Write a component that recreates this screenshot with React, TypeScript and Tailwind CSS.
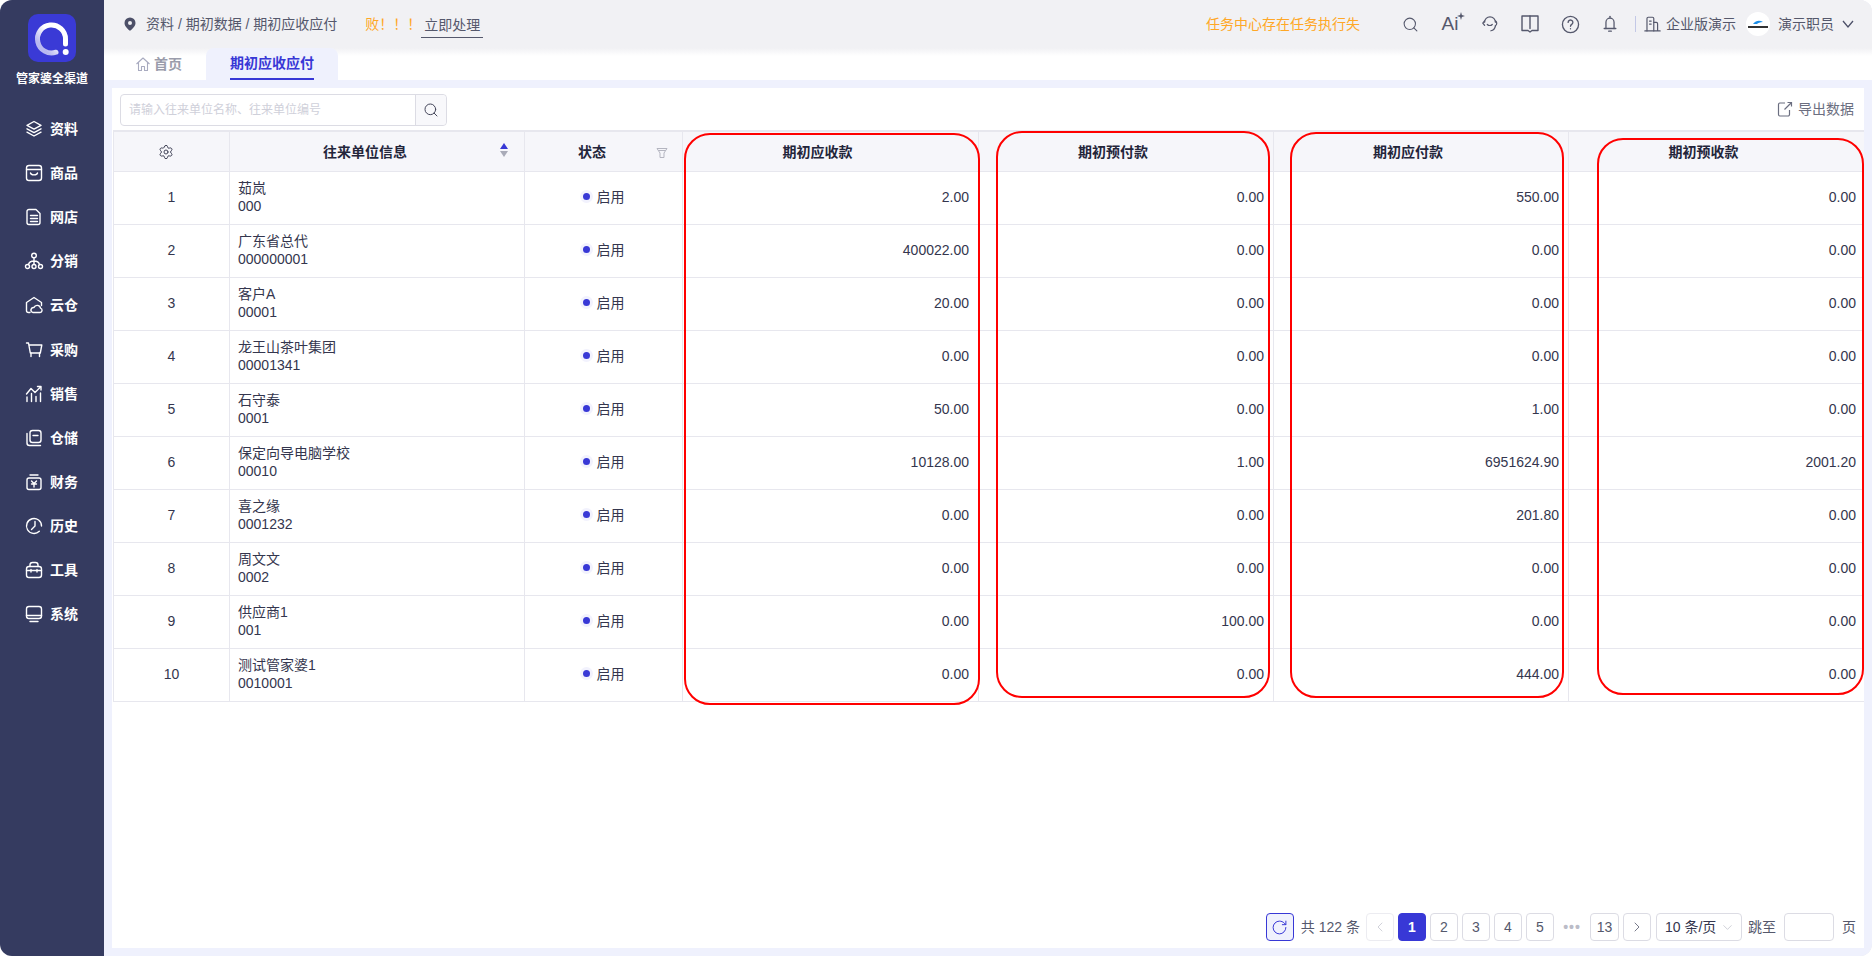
import { useState, type ReactNode } from "react";
import { ChevronDown, ChevronLeft, ChevronRight, RotateCw, Search, Settings } from "lucide-react";

type IconProps = { children: ReactNode; size?: number; className?: string };

function Ico({ children, size = 20, className = "" }: IconProps) {
  return (
    <svg
      width={size}
      height={size}
      viewBox="0 0 20 20"
      fill="none"
      stroke="currentColor"
      strokeWidth="1.4"
      strokeLinecap="round"
      strokeLinejoin="round"
      className={className}
    >
      {children}
    </svg>
  );
}

const NAV: { label: string; icon: ReactNode; text: string }[] = [
  {
    label: "资料",
    text: "ml-0",
    icon: (
      <Ico>
        <path d="M10 2.500l7 3.800-7 3.800-7-3.800z" />
        <path d="M3 9.800l7 3.800 7-3.800" />
        <path d="M3 13.200l7 3.800 7-3.800" />
      </Ico>
    ),
  },
  {
    label: "商品",
    text: "ml-0",
    icon: (
      <Ico>
        <rect x="2.500" y="2.500" width="15" height="15" rx="2.500" />
        <path d="M2.500 6.500h15" />
        <path d="M6.500 10c.5 2.500 6.500 2.500 7 0" />
      </Ico>
    ),
  },
  {
    label: "网店",
    text: "ml-0",
    icon: (
      <Ico>
        <path d="M5 2.500h7l4 4v9a2 2 0 0 1-2 2H5a2 2 0 0 1-2-2v-11a2 2 0 0 1 2-2z" />
        <path d="M6.500 8.500h7M6.500 11.500h7M6.500 14.500h7" />
      </Ico>
    ),
  },
  {
    label: "分销",
    text: "ml-[2px]",
    icon: (
      <Ico>
        <circle cx="10" cy="4.500" r="2.300" />
        <circle cx="3.500" cy="15.500" r="2" />
        <circle cx="10" cy="15.500" r="2" />
        <circle cx="16.500" cy="15.500" r="2" />
        <path d="M10 7v6.500M4.500 13.500c.5-2 2-3.500 5.500-3.500s5 1.500 5.500 3.500" />
      </Ico>
    ),
  },
  {
    label: "云仓",
    text: "ml-0",
    icon: (
      <Ico>
        <path d="M6 17.500H4.500a2 2 0 0 1-2-2V7.500L10 2.500l7.500 5v3" />
        <path d="M9 17.500h7a2.200 2.200 0 0 0 .5-4.300 3.400 3.400 0 0 0-6.500-.7A2.500 2.500 0 0 0 9 17.500z" />
      </Ico>
    ),
  },
  {
    label: "采购",
    text: "ml-0",
    icon: (
      <Ico>
        <path d="M2.500 3h2l1.800 10h10l1.500-8H5" />
        <path d="M7 13v3.500M15.500 13v3.500" />
      </Ico>
    ),
  },
  {
    label: "销售",
    text: "ml-[1px]",
    icon: (
      <Ico>
        <path d="M2.500 10L7 4.500l4 4 5.500-5.500" />
        <path d="M13.500 2.500h3.500V6" />
        <path d="M3 13v4.500M7.500 9.500v8M12 12.500v5M16.500 9v8.500" />
      </Ico>
    ),
  },
  {
    label: "仓储",
    text: "ml-0",
    icon: (
      <Ico>
        <path d="M3 5.500v9.500a2.500 2.500 0 0 0 2.500 2.500h11" />
        <rect x="6" y="2.500" width="11" height="12" rx="2.500" />
        <path d="M9 7.500h5" />
      </Ico>
    ),
  },
  {
    label: "财务",
    text: "ml-0",
    icon: (
      <Ico>
        <path d="M6 3h8" />
        <rect x="3" y="6" width="14" height="11.500" rx="2" />
        <path d="M7.500 9l2.500 2.500L12.500 9M7.500 12h5M10 11.500v3.500" />
      </Ico>
    ),
  },
  {
    label: "历史",
    text: "ml-0",
    icon: (
      <Ico>
        <path d="M17.500 10a7.500 7.500 0 1 0-2.200 5.300" />
        <path d="M11 5.500V10l-3.500 3.500" />
      </Ico>
    ),
  },
  {
    label: "工具",
    text: "ml-0",
    icon: (
      <Ico>
        <rect x="2.500" y="6.500" width="15" height="11" rx="2.500" />
        <path d="M6 6.500V5a2.500 2.500 0 0 1 2.500-2.500h3A2.500 2.500 0 0 1 14 5v1.500" />
        <path d="M2.500 10.500h15M7 9.500v2.500M13 9.500v2.500" />
      </Ico>
    ),
  },
  {
    label: "系统",
    text: "ml-[1px]",
    icon: (
      <Ico>
        <rect x="2.500" y="2.500" width="15" height="12" rx="2.500" />
        <path d="M2.500 11.500h15M6 17.500h8" />
      </Ico>
    ),
  },
];

const ROWS = [
  ["茹岚", "000", "2.00", "0.00", "550.00", "0.00"],
  ["广东省总代", "000000001", "400022.00", "0.00", "0.00", "0.00"],
  ["客户A", "00001", "20.00", "0.00", "0.00", "0.00"],
  ["龙王山茶叶集团", "00001341", "0.00", "0.00", "0.00", "0.00"],
  ["石守泰", "0001", "50.00", "0.00", "1.00", "0.00"],
  ["保定向导电脑学校", "00010", "10128.00", "1.00", "6951624.90", "2001.20"],
  ["喜之缘", "0001232", "0.00", "0.00", "201.80", "0.00"],
  ["周文文", "0002", "0.00", "0.00", "0.00", "0.00"],
  ["供应商1", "001", "0.00", "100.00", "0.00", "0.00"],
  ["测试管家婆1", "0010001", "0.00", "0.00", "444.00", "0.00"],
];

const GRID = "grid grid-cols-[116px_295px_158px_296px_295px_295px_295px]";

function Logo() {
  return (
    <div className="w-12 h-12 rounded-[10px] bg-[#3a3ad6] flex items-center justify-center">
      <svg width="48" height="48" viewBox="0 0 48 48" fill="none">
        <defs>
          <linearGradient id="ring" x1="12" y1="30" x2="30" y2="14" gradientUnits="userSpaceOnUse">
            <stop offset="0" stopColor="#b9b9f0" />
            <stop offset="0.6" stopColor="#ffffff" />
            <stop offset="1" stopColor="#ffffff" />
          </linearGradient>
        </defs>
        <path d="M28 38.200A14 14 0 1 1 37.500 25V30" stroke="url(#ring)" strokeWidth="5" strokeLinecap="round" />
        <circle cx="37.700" cy="38" r="3" fill="#fff" />
      </svg>
    </div>
  );
}

function Sidebar() {
  return (
    <aside className="w-[104px] shrink-0 bg-[#353b60] text-white flex flex-col">
      <div className="pt-[14px] flex justify-center">
        <Logo />
      </div>
      <div className="mt-[10px] text-center text-xs font-bold leading-[14px]">管家婆全渠道</div>
      <nav className="mt-[21px] flex flex-col">
        {NAV.map((n) => (
          <div key={n.label} className="h-[44.1px] flex items-center pl-[24px]">
            <span className="w-5 h-5 flex items-center justify-center">{n.icon}</span>
            <span className={`ml-[6px] text-sm font-bold ${n.text}`}>{n.label}</span>
          </div>
        ))}
      </nav>
    </aside>
  );
}

function TopBar() {
  return (
    <header className="h-12 shrink-0 bg-[#f1f1f4] flex items-center text-sm text-[#55586c]">
      <svg width="14" height="14" viewBox="0 0 14 14" className="ml-[19px] mr-[9px]">
        <path
          fillRule="evenodd"
          d="M7 .5a5.500 5.500 0 0 1 5.500 5.500c0 3.200-3.500 6.500-5.500 7.800C5 12.500 1.500 9.200 1.500 6A5.500 5.500 0 0 1 7 .5zM7 4a2 2 0 1 0 0 4 2 2 0 0 0 0-4z"
          fill="#4d5068"
        />
      </svg>
      <span>资料 / 期初数据 / 期初应收应付</span>
      <span className="ml-[28px] text-[#ffa726]">败！！！</span>
      <span className="px-[3px] leading-[24px] border-b border-[#55586c] mt-[2px]">立即处理</span>
      <span className="ml-auto mr-[30px] text-[#ffa726]">任务中心存在任务执行失</span>
      <div className="flex items-center text-[#55586c]">
        <span className="w-10 flex justify-center">
          <Search size={17} strokeWidth={1.5} />
        </span>
        <span className="w-10 flex justify-center">
          <span className="relative text-[19px] leading-5 font-normal">
            Ai
            <svg width="8" height="8" viewBox="0 0 8 8" className="absolute -right-[7px] -top-[2px]">
              <path d="M4 0l.9 3.100L8 4l-3.100.9L4 8l-.9-3.100L0 4l3.100-.9z" fill="currentColor" />
            </svg>
          </span>
        </span>
        <span className="w-10 flex justify-center">
          <Ico size={18}>
            <path d="M4 8a6 6 0 0 1 12 0" />
            <path d="M16 6.500c2 1 2 4.500 0 5.500" />
            <path d="M16 12c-.5 3-2.500 5-5 5.500" />
            <path d="M4 6.500L2 9l2 2.500" />
            <path d="M7 10.500c1.500 1.500 4 1.500 5.500 0" />
          </Ico>
        </span>
        <span className="w-10 flex justify-center">
          <Ico size={20}>
            <path d="M2 2h16v14.500H12l-2 1.500-2-1.500H2z" />
            <path d="M10 2v12.500" />
          </Ico>
        </span>
        <span className="w-10 flex justify-center">
          <Ico size={19}>
            <circle cx="10" cy="10" r="8.500" />
            <path d="M7.500 7.800a2.500 2.500 0 1 1 3.800 2.100c-.9.6-1.300 1-1.300 2" />
            <path d="M10 14.500v.1" />
          </Ico>
        </span>
        <span className="w-10 flex justify-center">
          <Ico size={18}>
            <path d="M10 1.500v1.500" />
            <path d="M5.500 15V8a4.500 4.500 0 0 1 9 0v7" />
            <path d="M3.500 15h13" />
            <path d="M8.500 18h3" />
          </Ico>
        </span>
      </div>
      <span className="ml-[5px] w-px h-4 bg-[#c3c8e6]" />
      <span className="ml-[8px]">
        <Ico size={17}>
          <path d="M3.500 17.500V3a1.500 1.500 0 0 1 1.500-1.500h5A1.500 1.500 0 0 1 11.500 3v14.500" />
          <path d="M11.500 7.500h3a1.500 1.500 0 0 1 1.500 1.500v8.500M1 17.500h18M6.500 6h2M6.500 9.500h2" />
        </Ico>
      </span>
      <span className="ml-[5px]">企业版演示</span>
      <span className="ml-[10px] w-6 h-6 rounded-full bg-white flex flex-col items-center justify-center">
        <svg width="12" height="5" viewBox="0 0 12 5" className="mb-px">
          <path d="M1 4c3-4 7-4 10-2-3 0-5 1-6 2z" fill="#1c8ee8" />
        </svg>
        <span className="w-[20px] h-[2px] bg-[#333]" />
      </span>
      <span className="ml-2">演示职员</span>
      <svg width="14" height="14" viewBox="0 0 14 14" fill="none" stroke="#4d5068" strokeWidth="1.300" className="ml-[7px] mr-[17px] shrink-0">
        <path d="M2 4l5 6 5-6" />
      </svg>
    </header>
  );
}

function Tabs() {
  return (
    <div className="relative h-8 shrink-0 bg-white flex items-end">
      <div className="absolute inset-x-0 top-0 h-2 bg-gradient-to-b from-[#f1f1f4] to-white" />
      <div className="relative h-8 ml-[31px] flex items-center text-sm font-bold text-[#9a9cab]">
        <svg width="16" height="16" viewBox="0 0 16 16" fill="none" stroke="#a9abc0" strokeWidth="1.100" className="mr-[3px]">
          <path d="M1.500 8L8 2l6.500 6M3.500 6.500V14.500h3v-4h3v4h3V6.500" strokeLinejoin="round" />
        </svg>
        首页
      </div>
      <div className="relative ml-[24px] w-[132px] h-8 rounded-t-lg bg-[#eff1fd] flex justify-center">
        <span className="h-8 leading-[30px] border-b-2 border-[#3838d6] text-sm font-bold text-[#3838d6]">
          期初应收应付
        </span>
      </div>
    </div>
  );
}

function Toolbar() {
  return (
    <div className="h-[42px] shrink-0 flex items-center justify-between pl-2 pr-[10px]">
      <div className="flex h-8 w-[327px] mt-[2px] border border-[#dcdce4] rounded">
        <div className="flex-1 flex items-center pl-2 text-xs text-[#cfd0da]">请输入往来单位名称、往来单位编号</div>
        <div className="w-[31px] border-l border-[#dcdce4] bg-[#f8f8fb] flex items-center justify-center text-[#44465a] rounded-r">
          <Search size={16} strokeWidth={1.5} />
        </div>
      </div>
      <div className="flex items-center text-sm text-[#6b6e80]">
        <svg width="16" height="16" viewBox="0 0 16 16" fill="none" stroke="#6b6e80" strokeWidth="1.200" className="mr-[5px]">
          <path d="M8 2H3a1.500 1.500 0 0 0-1.500 1.500v10A1.500 1.500 0 0 0 3 15h8a1.500 1.500 0 0 0 1.500-1.500V9" />
          <path d="M7.500 8.500L14.500 1.500M10.500 1.500h4v4" />
        </svg>
        导出数据
      </div>
    </div>
  );
}

function HeaderCell({ children, className = "" }: { children?: ReactNode; className?: string }) {
  return (
    <div className={`relative h-[39px] flex items-center justify-center text-sm font-bold text-[#23253a] ${className}`}>
      {children}
    </div>
  );
}

function Table() {
  const edge = "border-r border-[#e7e7ee]";
  return (
    <div className="ml-px w-[1751px] border-t-2 border-[#e7e7ee]">
      <div className={`${GRID} bg-[#f6f6fa] border-b border-[#e7e7ee] border-l`}>
        <HeaderCell className={edge}>
          <Settings size={16} strokeWidth={1.5} className="text-[#44465a] -ml-[11px]" />
        </HeaderCell>
        <HeaderCell className={`pr-[24px] ${edge}`}>
          往来单位信息
          <span className="absolute right-[16px] top-[11px] flex flex-col gap-[2px]">
            <span className="w-0 h-0 border-x-[4px] border-x-transparent border-b-[6px] border-b-[#3838d6]" />
            <span className="w-0 h-0 border-x-[4px] border-x-transparent border-t-[6px] border-t-[#a9abb8]" />
          </span>
        </HeaderCell>
        <HeaderCell className={`pr-[23px] ${edge}`}>
          状态
          <svg width="12" height="12" viewBox="0 0 12 12" fill="none" stroke="#b4b5c0" strokeWidth="1" className="absolute right-[14px] top-[15px]">
            <path d="M1 1.500h10L8 6v4.500H4V6z" />
            <path d="M2.500 3.500h7" />
          </svg>
        </HeaderCell>
        <HeaderCell className={`pr-[26px] ${edge}`}>期初应收款</HeaderCell>
        <HeaderCell className={`pr-[26px] ${edge}`}>期初预付款</HeaderCell>
        <HeaderCell className={`pr-[26px] ${edge}`}>期初应付款</HeaderCell>
        <HeaderCell className="pr-[26px]">期初预收款</HeaderCell>
      </div>
      {ROWS.map((r, i) => (
        <div key={r[1]} className={`${GRID} h-[53px] border-b border-[#e7e7ee] border-l text-sm text-[#34364e]`}>
          <div className={`pb-[2px] flex items-center justify-center ${edge}`}>{i + 1}</div>
          <div className={`pb-[2px] flex flex-col justify-center pl-[8px] leading-[18.500px] ${edge}`}>
            <span>{r[0]}</span>
            <span>{r[1]}</span>
          </div>
          <div className={`pb-[2px] flex items-center justify-center ${edge}`}>
            <span className="w-[7px] h-[7px] mr-[7px] -mt-[2px] rounded-full bg-[#3838d6] ring-[3px] ring-[#f2f2fd]" />
            启用
          </div>
          {r.slice(2).map((v, j) => (
            <div key={j} className={`pb-[2px] flex items-center justify-end ${j < 3 ? `pr-[9px] ${edge}` : "pr-[8px]"}`}>
              {v}
            </div>
          ))}
        </div>
      ))}
    </div>
  );
}

// hand-drawn red marks sitting over the amount columns
function Marks() {
  return (
    <>
      <div className="absolute left-[572px] top-[45px] w-[296px] h-[572px] border-2 border-[#ff0000] rounded-[26px] pointer-events-none" />
      <div className="absolute left-[884px] top-[43px] w-[274px] h-[567px] border-2 border-[#ff0000] rounded-[26px] pointer-events-none" />
      <div className="absolute left-[1178px] top-[44px] w-[274px] h-[566px] border-2 border-[#ff0000] rounded-[26px] pointer-events-none" />
      <div className="absolute left-[1485px] top-[50px] w-[267px] h-[557px] border-2 border-[#ff0000] rounded-[26px] pointer-events-none" />
    </>
  );
}

function PageBtn({ children, active = false, muted = false, wide = false }: { children: ReactNode; active?: boolean; muted?: boolean; wide?: boolean }) {
  const look = active
    ? "bg-[#3838d6] border-[#3838d6] text-white font-bold"
    : muted
      ? "border-[#ececf1] text-[#c5c6d0]"
      : "border-[#dcdce4] text-[#55586c]";
  return (
    <span className={`${wide ? "w-[29px]" : "w-7"} h-7 border rounded flex items-center justify-center ${look}`}>{children}</span>
  );
}

function Pagination() {
  const [jump] = useState("");
  return (
    <div className="mt-auto mb-[7px] pr-2 flex items-center justify-end text-sm text-[#55586c]">
      <span className="w-7 h-7 rounded border border-[#3838d6] bg-[#eff1fd] text-[#3838d6] flex items-center justify-center">
        <RotateCw size={17} strokeWidth={1.4} />
      </span>
      <span className="ml-[7px] mr-[6px]">共 122 条</span>
      <div className="flex items-center gap-1">
        <PageBtn muted>
          <ChevronLeft size={16} strokeWidth={1.2} />
        </PageBtn>
        <PageBtn active>1</PageBtn>
        <PageBtn>2</PageBtn>
        <PageBtn>3</PageBtn>
        <PageBtn>4</PageBtn>
        <PageBtn>5</PageBtn>
      </div>
      <span className="w-[36px] text-center text-[#bbbcc8] tracking-[1px] font-bold leading-none">•••</span>
      <div className="flex items-center gap-1">
        <PageBtn wide>13</PageBtn>
        <PageBtn>
          <ChevronRight size={16} strokeWidth={1.2} />
        </PageBtn>
      </div>
      <span className="ml-[5px] w-[86px] h-7 border border-[#dcdce4] rounded flex items-center pl-2 text-[#34364e]">
        10 条/页
        <ChevronDown size={15} strokeWidth={1} className="ml-1 text-[#b4b5c0]" />
      </span>
      <span className="ml-[6px]">跳至</span>
      <input value={jump} readOnly className="ml-2 w-[50px] h-7 border border-[#dcdce4] rounded" />
      <span className="ml-[8px]">页</span>
    </div>
  );
}

export default function App() {
  return (
    <div
      className="flex w-[1872px] h-[956px] overflow-hidden rounded-[12px] bg-[#e8e8ec]"
      style={{ fontFamily: '"Liberation Sans", "Noto Sans CJK SC", sans-serif' }}
    >
      <Sidebar />
      <main className="flex-1 flex flex-col min-w-0 bg-[#eff1fd]">
        <TopBar />
        <Tabs />
        <div className="flex-1 p-2 flex min-h-0">
          <section className="relative flex-1 bg-white flex flex-col">
            <Toolbar />
            <Table />
            <Pagination />
            <Marks />
          </section>
        </div>
      </main>
    </div>
  );
}
